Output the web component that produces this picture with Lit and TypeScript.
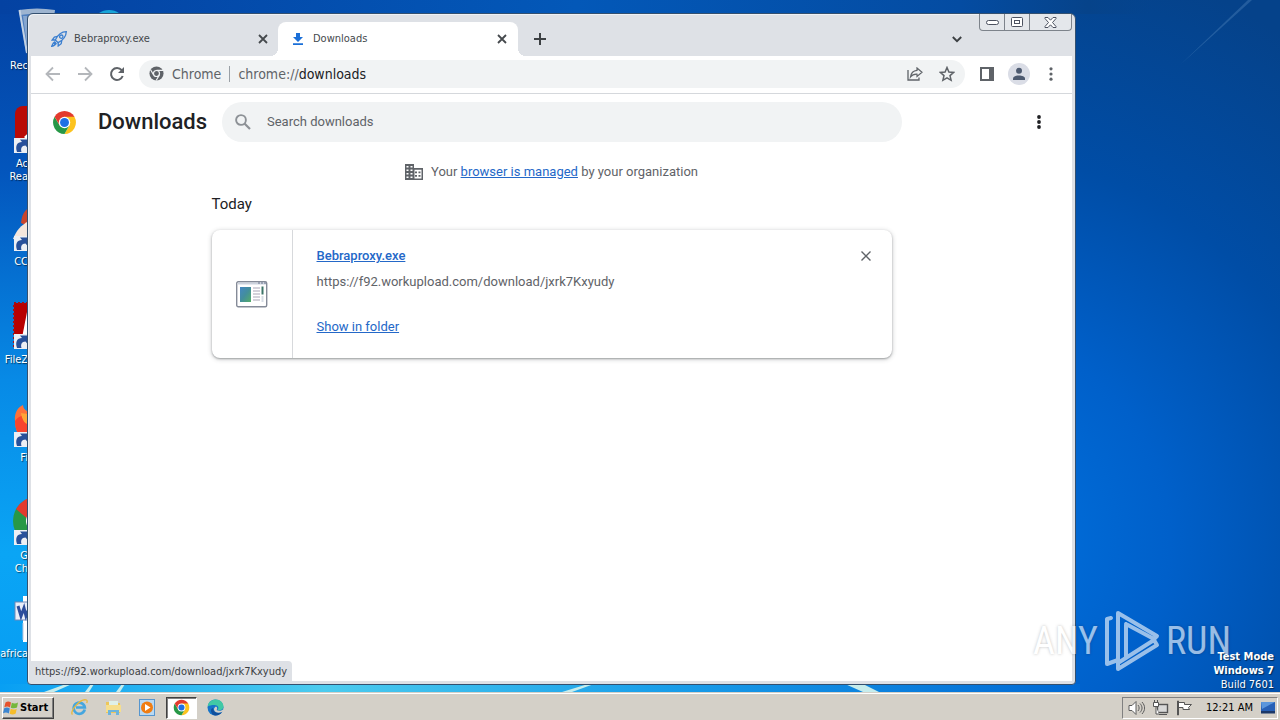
import { LitElement, html, css, svg } from "lit";
import { customElement } from "lit/decorators.js";

const chromeLogo = html`<svg viewBox="0 0 48 48" aria-hidden="true">
  <circle cx="24" cy="24" r="22" fill="#fff"/>
  <path d="M24 24 4.950 13 A22 22 0 0 1 43.050 13 Z" fill="#e33b2e"/>
  <path d="M24 13H43.050A22 22 0 0 1 24 46L33.500 29.500Z" fill="#fcc31e"/>
  <path d="M14.500 29.500 4.950 13A22 22 0 0 0 24 46L33.500 29.500Z" fill="#279847"/>
  <path d="M4.950 13 14.500 29.500 24 13Z" fill="#e33b2e"/>
  <circle cx="24" cy="24" r="11" fill="#fff"/>
  <circle cx="24" cy="24" r="8.600" fill="#1f70e4"/>
</svg>`;

const shortcut = svg`<g><rect x="1" y="33" width="15" height="15" fill="#eceff4"/>
  <path d="M4 47c-2-6 0-10 5-10l-2-2.500h8v9l-2.500-3c-4 0-5 3-4 6.500z" fill="#27509a"/></g>`;

const xIcon = html`<svg viewBox="0 0 10 10" aria-hidden="true"><path d="M1 1l8 8M9 1L1 9" stroke="currentColor" stroke-width="1.800" fill="none"/></svg>`;
const dots = html`<svg width="16" height="16" viewBox="0 0 16 16" aria-hidden="true"><g fill="currentColor"><circle cx="8" cy="3" r="1.900"/><circle cx="8" cy="8" r="1.900"/><circle cx="8" cy="13" r="1.900"/></g></svg>`;

@customElement("desktop-icons")
class DesktopIcons extends LitElement {
  static styles = css`
    :host { display: block; font: 11px/13px "DejaVu Sans Condensed", "DejaVu Sans", sans-serif; color: #fff; }
    .list { list-style: none; margin: 0; padding: 7px 0 0; }
    .item { height: 98px; box-sizing: border-box; display: flex; flex-direction: column; gap: 4px; }
    .pic { height: 48px; padding-left: 13px; }
    .pic svg { width: 48px; height: 48px; display: block; }
    .label { text-align: right; white-space: pre-line; overflow: hidden; text-shadow: 1px 1px 1px #0009; }
  `;
  private items = [
    { label: "Rec", art: svg`<path d="M6 3 42 3 36 46 13 46Z" fill="#4f7fbe"/><path d="M6 3q18-3 36 0l-1 5q-16-3-34 0z" fill="#9db4d0"/><path d="M6.500 3 14 46" stroke="#c3d2e4" stroke-width="2"/><path d="M10 9l5 37h3L14 9z" fill="#86a6cf"/>` },
    { label: "Ac\nRea", art: svg`<rect x="2" y="1" width="44" height="46" rx="8" fill="#b90b06"/><path d="M12 33c6-4 10-11 11-19 2 10 7 14 14 15-10 0-18 1-25 4z" fill="none" stroke="#fff" stroke-width="3"/>${shortcut}` },
    { label: "CC", art: svg`<path d="M8 20C9 9 14 4 22 2v24z" fill="#c8452c"/><path d="M0 36c3-8 8-14 16-18v20z" fill="#f4e6dc"/>${shortcut}` },
    { label: "FileZ", art: svg`<rect x="1" y="2" width="46" height="44" fill="#b80000" stroke="#a01018" stroke-width="2" stroke-dasharray="2 2"/><path d="M15 6h24v36H8z" fill="#fff"/><path d="M2 3h11L8 34H2z" fill="#b80000"/>${shortcut}` },
    { label: "Fi", art: svg`<path d="M2 22C1 14 5 8 10 6c0 3 2 5 4 6C18 6 24 4 30 6v36H12C5 38 2 30 2 22z" fill="#ff7139"/><path d="M2 22c0 12 6 18 14 20V16c-4 0-10 0-14 6z" fill="#f8452e"/><path d="M8 14c3 1 7 0 10 3v9c-6 0-9-5-10-12z" fill="#ffa436"/>${shortcut}` },
    { label: "G\nCh", art: svg`<circle cx="24" cy="24" r="24" fill="#279847"/><path d="M3 12A24 24 0 0 1 45 12L24 30z" fill="#e33b2e"/><circle cx="24" cy="24" r="11" fill="#fff"/>${shortcut}` },
    { label: "africa", art: svg`<path d="M10 1h34v46H10z" fill="#fff"/><rect x="2" y="7" width="18" height="18" fill="#e9eef9" stroke="#6f87b8"/><path d="M5 11l3 10 3-8 2 8 4-10" fill="none" stroke="#2c4d9c" stroke-width="3"/><path d="M10 28v17" stroke="#b9c6de"/>` },
  ];
  render() {
    return html`<ul class="list">${this.items.map((i) => html`<li class="item"><div class="pic"><svg viewBox="0 0 48 48" aria-hidden="true">${i.art}</svg></div><span class="label">${i.label}</span></li>`)}</ul>`;
  }
}

@customElement("browser-window")
class BrowserWindow extends LitElement {
  static styles = css`
    * { box-sizing: border-box; }
    :host { display: flex; flex-direction: column; background: #dee1e6; border: 1px solid #34506f; border-radius: 6px 6px 4px 4px; padding: 0 3px 3px 3px; box-shadow: inset 1px 1px 0 #eef1f5; }
    button { border: 0; background: none; padding: 0; margin: 0; font: inherit; color: inherit; display: grid; place-items: center; flex: none; }
    svg { display: block; }
    .ui { font-family: "DejaVu Sans Condensed", "DejaVu Sans", sans-serif; }
    .strip { display: flex; height: 42px; padding: 8px 0 0 8px; font-size: 11px; line-height: 16px; color: #3c4043; position: relative; flex: none; }
    .tab { display: flex; align-items: center; width: 239px; gap: 7px; padding: 0 7px 0 12px; height: 34px; color: #45494d; }
    .tab.on { background: #fff; border-radius: 8px 8px 0 0; position: relative; width: 240px; padding-right: 8px; }
    .tab.on::before, .tab.on::after { content: ""; position: absolute; bottom: 0; width: 8px; height: 8px; }
    .tab.on::before { left: -8px; background: radial-gradient(circle at 0 0, transparent 8px, #fff 8px); }
    .tab.on::after { right: -8px; background: radial-gradient(circle at 100% 0, transparent 8px, #fff 8px); }
    .fav { width: 16px; height: 16px; flex: none; }
    .name { flex: 1; }
    .x { width: 16px; height: 16px; }
    .x svg { width: 10px; height: 10px; }
    .plus { width: 28px; height: 34px; margin-left: 8px; }
    .chev { width: 28px; height: 34px; margin-left: auto; margin-right: 101px; }
    .caption { position: absolute; right: 0; top: 0; display: flex; border: 1px solid #7d838b; border-top: 0; border-radius: 0 0 4px 4px; background: #e4e7eb; }
    .caption button { width: 25px; height: 16px; border-right: 1px solid #7d838b; }
    .caption button:last-child { width: 41px; border: 0; }
    .bar { display: flex; align-items: center; height: 38px; background: #fff; border-bottom: 1px solid #d5d8dc; padding: 0 5px 2px 6px; flex: none; color: #5f6368; }
    .nav { width: 32px; height: 32px; }
    .nav.off { color: #b4b7bb; }
    .omni { flex: 1; display: flex; align-items: center; height: 28px; border-radius: 14px; background: #f1f3f4; margin: 0 6px; padding: 0 2px 0 10px; font-size: 14px; line-height: 20px; min-width: 0; }
    .omni .chip { padding: 0 8px; }
    .omni .sep { width: 1px; height: 16px; background: #9aa0a6; margin-right: 8px; }
    .url { flex: 1; }
    .url b { font-weight: 400; color: #202124; }
    .avatar { width: 22px; height: 22px; margin: 0 5px; }
    .page { flex: 1; background: #fff; font-family: Roboto, sans-serif; font-size: 13px; line-height: 20px; color: #5f6368; position: relative; min-height: 0; }
    .head { display: flex; align-items: center; height: 56px; padding: 0 19px 0 21px; }
    .logo { width: 25px; height: 25px; }
    .title { margin: 0 12px 0 21px; font-size: 22px; line-height: 28px; font-weight: 500; color: #202124; width: 112px; }
    .search { display: flex; align-items: center; flex: 0 1 680px; height: 40px; border-radius: 20px; background: #f1f3f4; padding: 0 12px; gap: 15px; }
    .search input { flex: 1; border: 0; outline: 0; background: none; font: inherit; padding: 0; color: #5f6368; }
    .search input::placeholder { color: #5f6368; opacity: 1; }
    .more { width: 28px; height: 28px; margin-left: auto; color: #202124; }
    .main { width: 680px; max-width: 100%; margin: 0 auto; }
    .managed { display: flex; justify-content: center; align-items: center; gap: 8px; padding-top: 12px; margin: 0; }
    a { color: #2468c8; text-decoration: underline; }
    .today { font-size: 15px; line-height: 20px; font-weight: 400; color: #202124; margin: 12px 0 16px; }
    .card { display: flex; height: 128px; border-radius: 8px; box-shadow: 0 1px 2px #3c404366, 0 1px 4px 1px #3c404330; background: #fff; }
    .thumb { width: 81px; border-right: 1px solid #d7d9dc; display: grid; place-items: center; }
    .info { flex: 1; padding: 16px 24px; display: flex; flex-direction: column; align-items: flex-start; }
    .file { font-weight: 500; }
    .src { margin: 6px 0 25px; }
    .card .x { margin: 18px 18px 0 0; color: #5f6368; }
    .status { position: absolute; left: 0; bottom: 0; height: 20px; background: #dee1e6; color: #3c4043; border-radius: 0 4px 0 0; padding: 0 5px 0 4px; font-size: 11px; line-height: 22px; }
  `;
  render() {
    return html`
      <div class="strip ui">
        <div class="tab">
          <svg class="fav" viewBox="0 0 16 16" fill="none" stroke="#3b7fd0" stroke-width="1.300" aria-hidden="true"><path d="M15.300.7C10.500.8 7 3.500 4.300 9l2.800 2.700c5.200-2.700 8-6 8.200-11z"/><circle cx="10.300" cy="5.700" r="1.700"/><path d="M6.500 5.300 3.400 6 1.200 9l3.100 0M10.800 9.500l-.6 3.200-3 2.300V11.700M4 10.500C2 11.500 1.500 13 .6 15.400c2.500-.6 4-1.400 4.800-3.400M2.800 13l2-2"/></svg>
          <span class="name">Bebraproxy.exe</span><button class="x" aria-label="Close tab">${xIcon}</button>
        </div>
        <div class="tab on">
          <svg class="fav" viewBox="0 0 16 16" fill="#1a6fd8" aria-hidden="true"><path d="M6 2h4v4h3l-5 5-5-5h3zM3 12.300h10v1.700H3z"/></svg>
          <span class="name">Downloads</span><button class="x" aria-label="Close tab">${xIcon}</button>
        </div>
        <button class="plus" aria-label="New tab"><svg width="12" height="12" viewBox="0 0 12 12"><path d="M6 0v12M0 6h12" stroke="currentColor" stroke-width="2"/></svg></button>
        <button class="chev" aria-label="Search tabs"><svg width="10" height="7" viewBox="0 0 10 7"><path d="M.8 1 5 5.200 9.200 1" fill="none" stroke="currentColor" stroke-width="1.900"/></svg></button>
        <div class="caption">
          <button aria-label="Minimize"><svg width="13" height="5" viewBox="0 0 13 5"><rect x=".5" y=".5" width="12" height="4" rx="2" fill="#fff" stroke="#4c5260"/></svg></button>
          <button aria-label="Maximize"><svg width="12" height="10" viewBox="0 0 12 10"><rect x=".5" y=".5" width="11" height="9" rx="1" fill="#fff" stroke="#4c5260"/><rect x="3.500" y="3.500" width="5" height="3" fill="#fff" stroke="#4c5260"/></svg></button>
          <button aria-label="Close"><svg width="13" height="11" viewBox="0 0 13 11"><path d="M1 .5h3l2.500 2.700L9 .5h3v1L8.500 5.500 12 9.500v1H9L6.500 7.800 4 10.500H1v-1l3.500-4L1 1.500z" fill="#fff" stroke="#4c5260"/></svg></button>
        </div>
      </div>
      <div class="bar">
        <button class="nav off" aria-label="Back"><svg width="16" height="16" viewBox="0 0 16 16"><path d="M15 8H2M8 1.500 1.500 8 8 14.500" fill="none" stroke="currentColor" stroke-width="1.800"/></svg></button>
        <button class="nav off" aria-label="Forward"><svg width="16" height="16" viewBox="0 0 16 16"><path d="M1 8h13M8 1.500 14.500 8 8 14.500" fill="none" stroke="currentColor" stroke-width="1.800"/></svg></button>
        <button class="nav" aria-label="Reload"><svg width="16" height="16" viewBox="0 0 16 16"><path d="M13.700 10A6 6 0 1 1 12.700 4.200L14 5.500" fill="none" stroke="currentColor" stroke-width="2"/><path d="M15 1v6H9z" fill="currentColor"/></svg></button>
        <div class="omni ui">
          <svg width="15" height="15" viewBox="0 0 16 16" aria-hidden="true"><circle cx="8" cy="8" r="7.500" fill="#5f6368"/><circle cx="8" cy="8" r="3.200" fill="none" stroke="#f1f3f4" stroke-width="1.300"/><path d="M8 4.600h7M5 9.700 1.700 4M11 9.700 7.600 15.500" stroke="#f1f3f4" stroke-width="1.200"/></svg>
          <span class="chip">Chrome</span><span class="sep"></span><span class="url">chrome://<b>downloads</b></span>
          <button class="nav" aria-label="Share"><svg width="16" height="14" viewBox="0 0 16 14"><path d="M1 3v10h11v-2.500" fill="none" stroke="currentColor" stroke-width="1.300"/><path d="M10 1l5 4.300-5 4.200V7.200C7 7 5 8 3.500 10 4 6.300 6.300 3.800 10 3.400z" fill="none" stroke="currentColor" stroke-width="1.200"/></svg></button>
          <button class="nav" aria-label="Bookmark"><svg width="16" height="16" viewBox="0 0 16 16"><path d="M8 1.500 9.900 6l4.800.4-3.700 3.200 1.100 4.700L8 11.800l-4.100 2.500L5 9.600 1.300 6.400 6.100 6z" fill="none" stroke="currentColor" stroke-width="1.500"/></svg></button>
        </div>
        <button class="nav" aria-label="Side panel"><svg width="14" height="14" viewBox="0 0 14 14"><path d="M0 0h14v14H0zM2 2v10h7V2z" fill="currentColor" fill-rule="evenodd"/></svg></button>
        <button class="avatar" aria-label="Profile"><svg width="22" height="22" viewBox="0 0 22 22"><circle cx="11" cy="11" r="11" fill="#dadde6"/><circle cx="11" cy="7.800" r="3" fill="#4d5a70"/><path d="M5 17v-1.500c0-4 12-4 12 0V17z" fill="#4d5a70"/></svg></button>
        <button class="nav" aria-label="Menu"><svg width="16" height="16" viewBox="0 0 20 20"><g fill="currentColor"><circle cx="10" cy="3.500" r="2"/><circle cx="10" cy="10" r="2"/><circle cx="10" cy="16.500" r="2"/></g></svg></button>
      </div>
      <main class="page">
        <header class="head">
          <div class="logo">${chromeLogo}</div><h1 class="title">Downloads</h1>
          <label class="search"><svg width="18" height="18" viewBox="0 0 18 18" aria-hidden="true"><circle cx="7" cy="7" r="4.900" fill="none" stroke="#8d9196" stroke-width="1.900"/><path d="M10.500 10.500 16 16" stroke="#8d9196" stroke-width="2.200"/></svg><input type="search" aria-label="Search downloads" placeholder="Search downloads"></label>
          <button class="more" aria-label="More actions">${dots}</button>
        </header>
        <div class="main">
          <p class="managed"><svg width="18" height="18" viewBox="0 0 18 18" aria-hidden="true"><path d="M0 1h9v4h9v12H0z" fill="#5f6368"/><g fill="#fff"><path d="M1.500 3h2v1.500h-2zM5.500 3h2v1.500h-2zM1.500 6.500h2V8h-2zM5.500 6.500h2V8h-2zM1.500 10h2v1.500h-2zM5.500 10h2v1.500h-2zM1.500 13.500h2V15h-2zM5.500 13.500h2V15h-2zM9.500 6.700h7v8.800h-7z"/></g><path d="M10 8.500h2v1.700h-2zM13.500 8.500h2v1.700h-2zM10 12h2v1.700h-2zM13.500 12h2v1.700h-2z" fill="#5f6368"/></svg><span>Your <a href="#">browser is managed</a> by your organization</span></p>
          <h2 class="today">Today</h2>
          <article class="card">
            <div class="thumb"><svg width="32" height="27" viewBox="0 0 32 27" aria-hidden="true"><defs><linearGradient id="g" x2="1" y2="1"><stop stop-color="#4487c4"/><stop offset=".5" stop-color="#438e9c"/><stop offset="1" stop-color="#55ad67"/></linearGradient></defs><rect x=".7" y=".7" width="30" height="25" rx="1.500" fill="#fff" stroke="#858b98" stroke-width="1.400"/><path d="M2 2.500h28" stroke="#cdd3de" stroke-width="2"/><path d="M22 2h2m1 0h2m1 0h2" stroke="#69758d"/><path d="M4 6h11v15H4z" fill="url(#g)"/><path d="M17 7h7M17 10h7M17 13h7M17 16h7M17 19h7" stroke="#a9a5b6"/><path d="M26.500 5.500v8" stroke="#3c7568" stroke-width="2"/><path d="M26.500 15v6" stroke="#d6dce5" stroke-width="2"/></svg></div>
            <div class="info"><a class="file" href="#">Bebraproxy.exe</a><span class="src">https://f92.workupload.com/download/jxrk7Kxyudy</span><a href="#">Show in folder</a></div>
            <button class="x" aria-label="Remove from list"><svg viewBox="0 0 10 10"><path d="M.5.5l9 9M9.500.5l-9 9" stroke="currentColor" stroke-width="1.400"/></svg></button>
          </article>
        </div>
        <div class="status ui">https://f92.workupload.com/download/jxrk7Kxyudy</div>
      </main>`;
  }
}

@customElement("task-bar")
class TaskBar extends LitElement {
  static styles = css`
    * { box-sizing: border-box; }
    :host { display: flex; align-items: center; height: 28px; background: #d4d0c8; border-top: 1px solid #d4d0c8; box-shadow: inset 0 1px #fff; padding: 2px 2px 0; font: 11px/16px "DejaVu Sans Condensed", "DejaVu Sans", sans-serif; color: #000; position: relative; }
    button { border: 0; background: none; padding: 0; font: inherit; color: inherit; display: grid; place-items: center; width: 31px; height: 22px; margin-right: 3px; }
    svg { display: block; }
    .start { display: flex; gap: 1px; width: 52px; font-weight: 700; border: 1px solid; border-color: #fff #404040 #404040 #fff; box-shadow: inset -1px -1px #808080; margin-right: 10px; }
    .on { background: #fff; border: 1px solid; border-color: #404040 #fff #fff #404040; box-shadow: inset 1px 1px #808080; }
    .on svg { width: 17px; height: 17px; }
    .tray { margin-left: auto; height: 22px; display: flex; align-items: center; gap: 7px; border: 1px solid; border-color: #808080 #fff #fff #808080; padding: 0 1px 0 5px; }
    .clock { padding: 0 0 0 6px; }
  `;
  render() {
    return html`
      <button class="start"><svg width="16" height="16" viewBox="0 0 16 16" aria-hidden="true"><path d="M2.500 2.500C4.500 1 6 1.200 8 2.500L7 7.500C5 6.300 3.500 6.300 1.300 7.300z" fill="#e6522c"/><path d="M8.800 2.800c2 1 4 1 6.200-.2L14 7.500c-2 1-4 1-6.200.2z" fill="#75b73b"/><path d="M1.200 8.300C3 7.200 5 7.300 6.800 8.500l-1 5C4 12.300 2 12.300 0 13.300z" fill="#3b85d0"/><path d="M7.700 8.800c2 1 4 1 6-.1l-1 4.800c-2 1.200-4 1.200-6 .2z" fill="#f5bd2b"/></svg><span>Start</span></button>
      <button aria-label="Internet Explorer"><svg width="17" height="17" viewBox="0 0 17 17"><path d="M13.700 10.500A5.600 5.600 0 1 1 13.800 8.500H5" fill="none" stroke="#45a6df" stroke-width="2.700"/><path d="M1.500 15.500C-2 13 9-1 15.500 1c1 .5.700 2 .2 3" fill="none" stroke="#e8b83c" stroke-width="1.300"/></svg></button>
      <button aria-label="Explorer"><svg width="17" height="17" viewBox="0 0 17 17"><path d="M1 3h5l1 1h8v10H1z" fill="#edc659"/><path d="M4 2h9v5H4z" fill="#dff0e8"/><path d="M1 6h15v7H1z" fill="#f6de8d"/><path d="M3 16v-5h11v5h-3v-3H6v3z" fill="#6db4dc"/></svg></button>
      <button aria-label="Media Player"><svg width="17" height="17" viewBox="0 0 17 17"><rect x=".5" y=".5" width="15" height="16" fill="#b9d9f2" stroke="#5696cf"/><circle cx="8" cy="8.500" r="6" fill="#f07d12"/><path d="M6 5v7l5.500-3.500z" fill="#fff"/></svg></button>
      <button class="on" aria-label="Chrome">${chromeLogo}</button>
      <button aria-label="Edge"><svg width="17" height="17" viewBox="0 0 17 17"><circle cx="8.500" cy="8.500" r="8" fill="#1674c9"/><path d="M.6 7.500C1.500 2.500 5 .5 8.500.5c5 0 8 3.500 8 7 0 3-3 4.500-6 3.500 2-2 .5-5-3-5-3 0-5.500.5-6.900 1.500z" fill="#41c9a5"/><path d="M6 9c0 4 4 6 9 4-2 3-5 4-8 3.200C3.500 14.500 3 9.500 6 9z" fill="#114f9c"/><path d="M9 7.500c1.500 1 1.500 2.500.5 3.500 1.500 1.300 5 1 6.500-.5v2c-3 2-8.500 1.500-9-2C6.900 9 8 8 9 7.500z" fill="#d4d0c8"/></svg></button>
      <div class="tray">
        <svg width="17" height="16" viewBox="0 0 17 16" fill="#fff" stroke="#5c5c5c" aria-hidden="true"><path d="M1 5.500h3l4-4v13l-4-4H1z"/><path d="M10 5c1.500 2 1.500 4 0 6M12 3.500c2.700 3 2.700 6 0 9M14 2c3.500 4 3.500 8 0 12" fill="none"/></svg>
        <svg width="17" height="16" viewBox="0 0 17 16" fill="#fff" stroke="#555" aria-hidden="true"><rect x="5.500" y="4.500" width="10" height="8" fill="#d8d8d8" stroke-width="1.400"/><path d="M7 14.500h8M1.500 2.500h5v4h-5zM2.500 0v2M5.500 0v2M4 7v7h3"/></svg>
        <svg width="17" height="16" viewBox="0 0 17 16" fill="#fff" stroke="#555" aria-hidden="true"><path d="M1.500 1v14h1V1zM2.500 2.500h6v2h7l-3 3 1 2H7v-2H2.500z"/></svg>
        <span class="clock">12:21 AM</span>
        <svg width="16" height="14" viewBox="0 0 16 14" aria-hidden="true"><path d="M1 1h14v9H1z" fill="#2760b6"/><path d="M1 1h14L2 8z" fill="#5b96dc"/><path d="M1 10h14v2.500H1z" fill="#1b3869"/></svg>
      </div>`;
  }
}

@customElement("app-root")
class AppRoot extends LitElement {
  static styles = css`
    * { box-sizing: border-box; }
    :host { display: flex; flex-direction: column; height: 100vh; overflow: hidden; font-family: "DejaVu Sans Condensed", "DejaVu Sans", sans-serif; }
    .desk { flex: 1; min-height: 0; position: relative; overflow: hidden; background: #0053b4; }
    .wall { position: absolute; inset: 0; width: 100%; height: 100%; }
    .icons { position: absolute; left: 0; top: 0; width: 28px; }
    .edge { position: absolute; left: 94px; top: 10px; }
    .win { position: absolute; inset: 13px 204px 7px 27px; }
    .mark { position: absolute; right: 49px; bottom: 20px; display: flex; align-items: center; gap: 6px; color: #fff; opacity: .6; font: 400 38px/62px "Roboto Condensed", "Liberation Sans Narrow", "DejaVu Sans Condensed", sans-serif; text-shadow: 0 0 3px #0006; }
    .build { position: absolute; right: 6px; bottom: 0; margin: 0; text-align: right; color: #fff; font-size: 11px; line-height: 14px; text-shadow: 1px 1px 1px #0008; }
    .build b { display: block; }
  `;
  render() {
    return html`
      <div class="desk">
        <svg class="wall" viewBox="0 0 1280 692" preserveAspectRatio="none" aria-hidden="true">
          <defs>
            <linearGradient id="l" x2="0" y2="1"><stop stop-color="#0442a2"/><stop offset=".25" stop-color="#0356bd"/><stop offset=".55" stop-color="#078ae6"/><stop offset=".8" stop-color="#0aa5f5"/><stop offset="1" stop-color="#079df3"/></linearGradient>
            <radialGradient id="r" gradientUnits="userSpaceOnUse" cx="960" cy="540" r="600"><stop stop-color="#0074e2"/><stop offset=".35" stop-color="#0060ca"/><stop offset=".65" stop-color="#004da6"/><stop offset="1" stop-color="#05428a"/></radialGradient>
            <linearGradient id="t"><stop stop-color="#0442a2"/><stop offset=".45" stop-color="#0358b8"/><stop offset=".75" stop-color="#044ca2"/><stop offset=".85" stop-color="#06438a"/><stop offset=".9" stop-color="#06438a" stop-opacity="0"/></linearGradient>
            <linearGradient id="b"><stop stop-color="#089ff3"/><stop offset=".3" stop-color="#4ccbee"/><stop offset=".6" stop-color="#1ba0ea"/><stop offset="1" stop-color="#0068d4"/></linearGradient>
          </defs>
          <rect width="1280" height="692" fill="url(#r)"/>
          <rect width="700" height="692" fill="url(#l)"/>
          <rect width="1280" height="14" fill="url(#t)"/>
          <rect y="684" width="1080" height="8" fill="url(#b)"/>
          <path d="M44 692 66 684h6L54 692zM85 692l6-8h3l-5 8zM116 692l6-8h3l-5 8zM562 692l26-8h6l-22 8zM845 684h18l16 8h-16z" fill="#c6ecec"/>
          <path d="M1180 65 1248 0h4z" fill="#4f84bb" opacity=".4"/>
        </svg>
        <desktop-icons class="icons"></desktop-icons>
        <svg class="edge" width="30" height="20" viewBox="0 0 30 20" aria-hidden="true"><ellipse cx="15" cy="10" rx="14" ry="10" fill="#18a5d8"/></svg>
        <browser-window class="win"></browser-window>
        <div class="mark"><span>ANY</span><svg width="56" height="62" viewBox="0 0 56 62" fill="none" stroke="#fff" stroke-width="4" stroke-linejoin="round" stroke-linecap="round" aria-hidden="true"><path d="M7 8 3 9v45l11-4M14 50V3L53 26l-3 3L22 14M22 14v34M14 59 53 35l-3-5L14 53z"/></svg><span>RUN</span></div>
        <p class="build"><b>Test Mode</b><b>Windows 7</b>Build 7601</p>
      </div>
      <task-bar></task-bar>`;
  }
}
